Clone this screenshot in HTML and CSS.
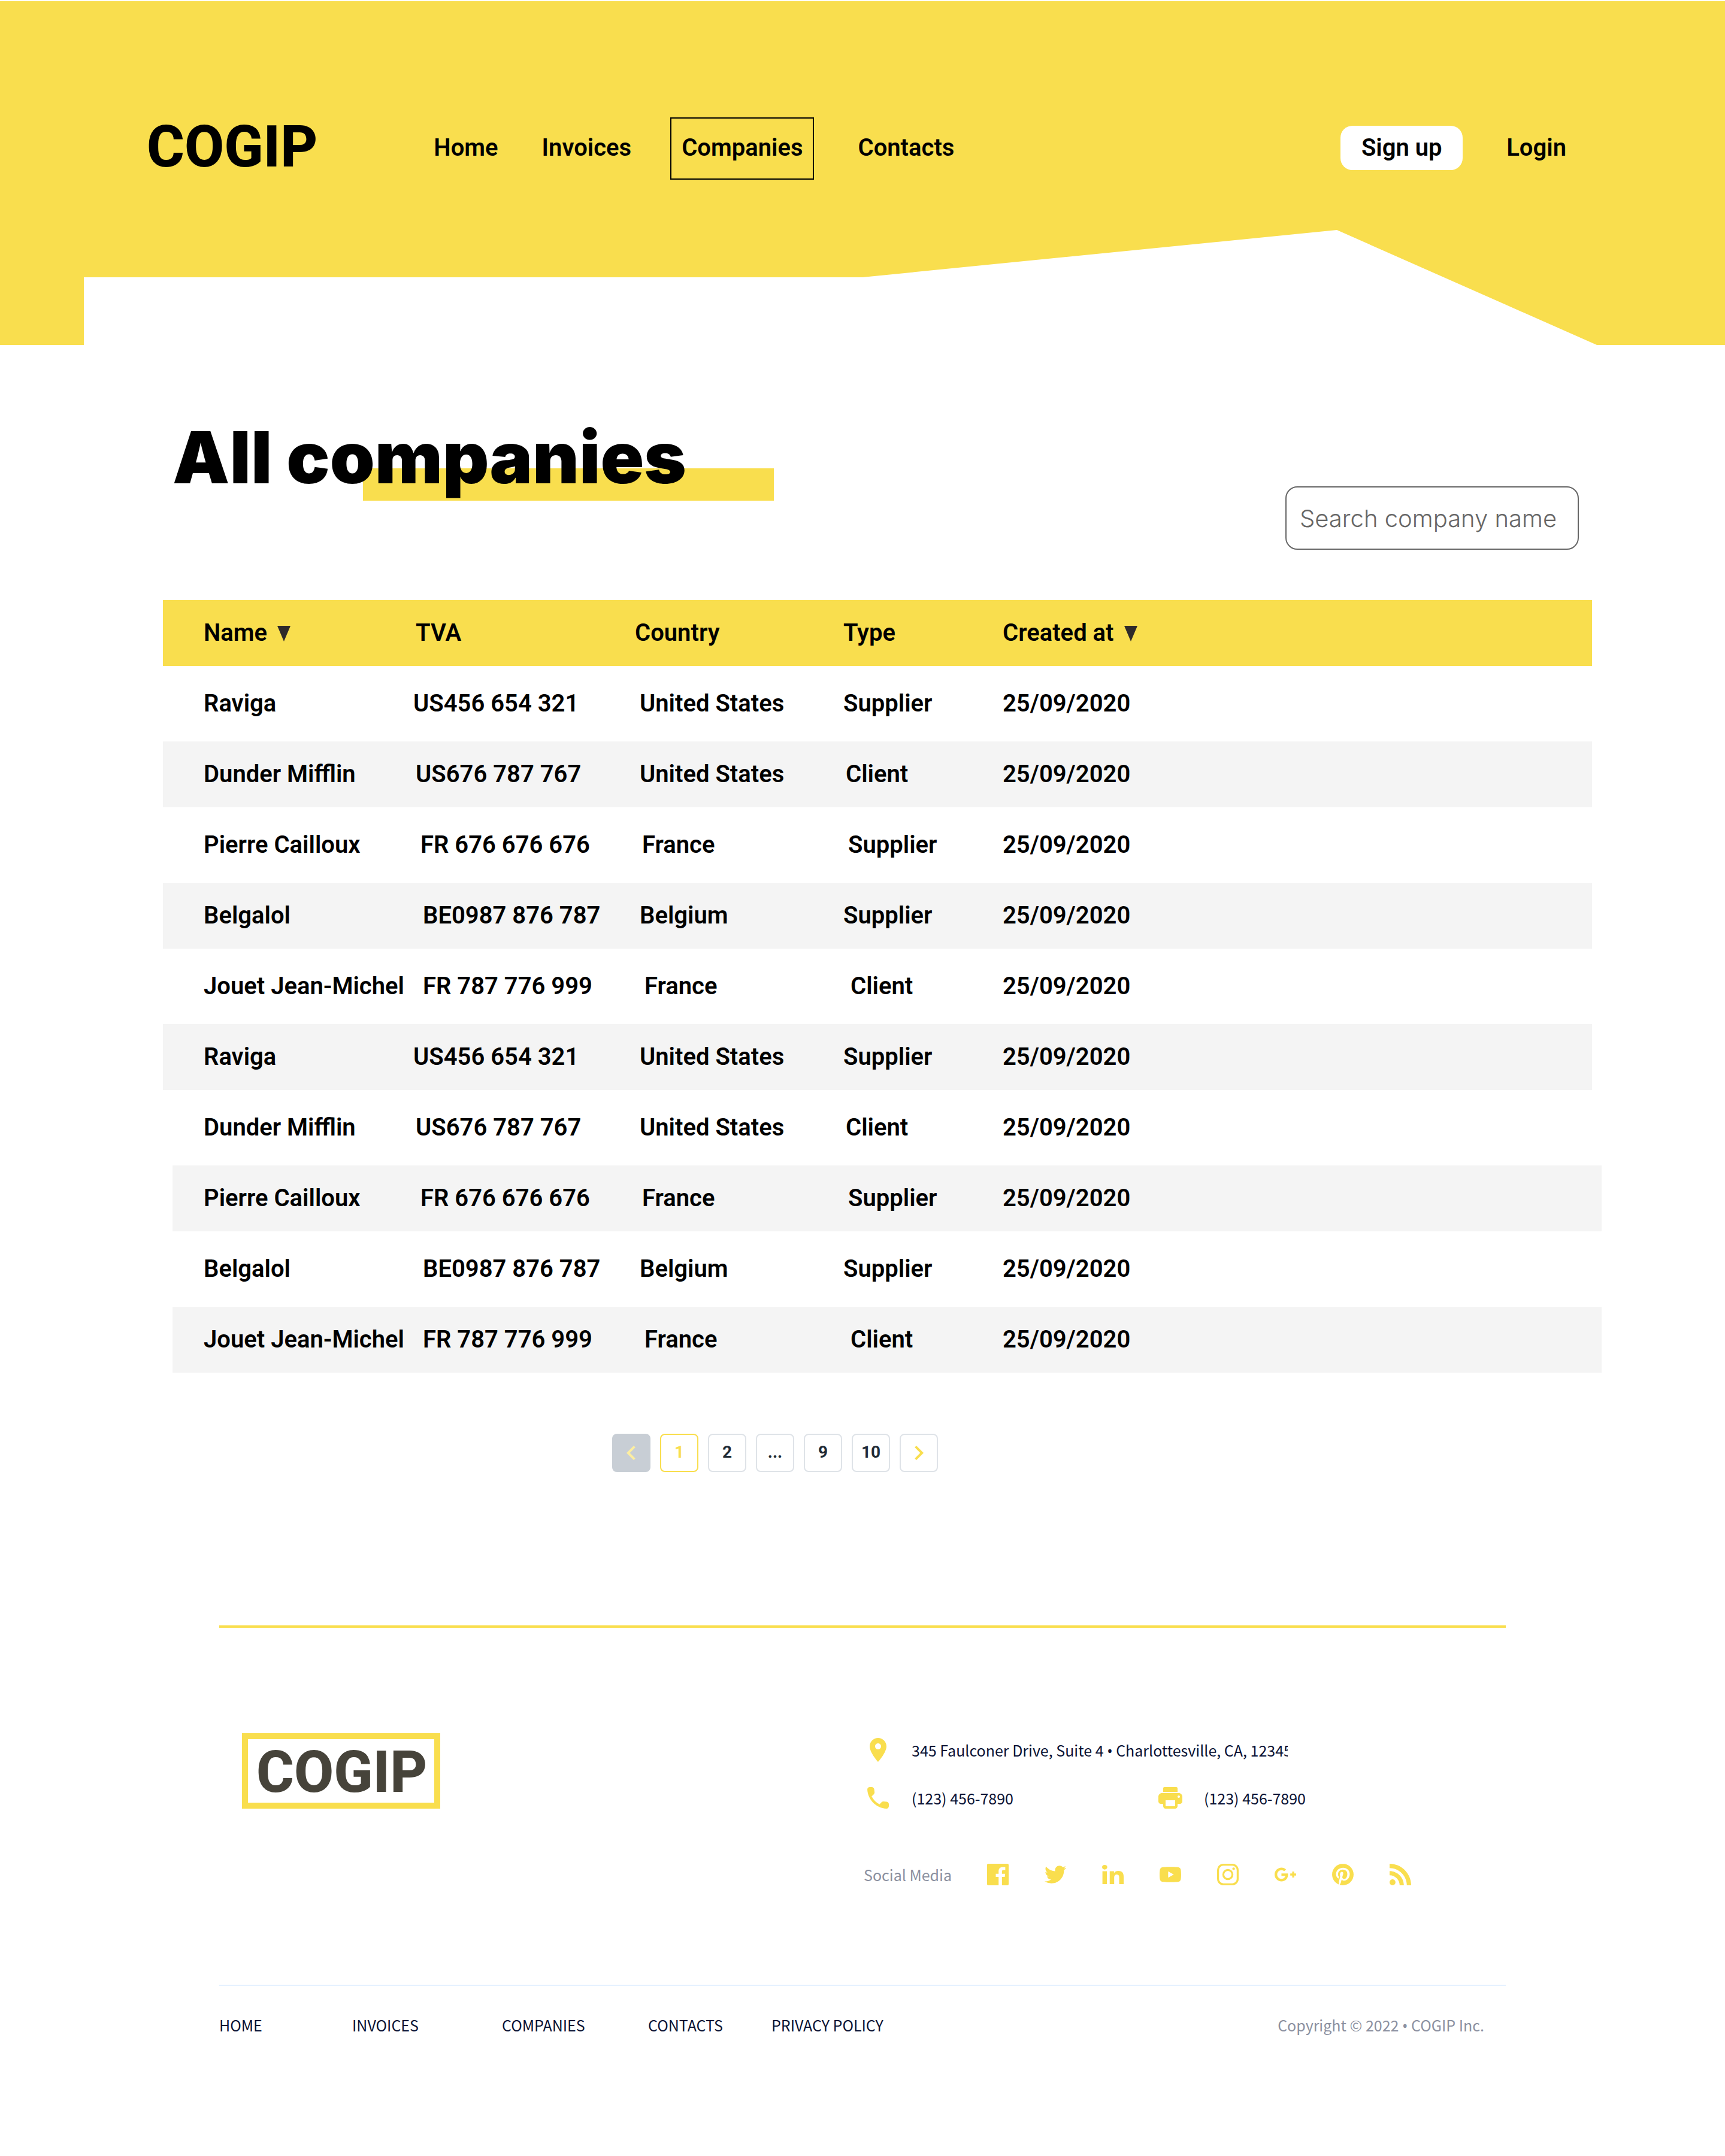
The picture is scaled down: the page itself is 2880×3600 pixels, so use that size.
FILE: index.html
```html
<!DOCTYPE html>
<html lang="en">
<head>
<meta charset="utf-8">
<title>COGIP - All companies</title>
<meta name="viewport" content="width=device-width, initial-scale=1">
<link rel="stylesheet" href="styles.css">
</head>
<body>
<header class="site-header">
  <div class="header-row">
    <a class="logo" href="#">COGIP</a>
    <nav class="main-nav" aria-label="Main">
      <a href="#">Home</a>
      <a href="#">Invoices</a>
      <a class="current" href="#" aria-current="page">Companies</a>
      <a href="#">Contacts</a>
    </nav>
    <div class="auth">
      <button class="signup" type="button">Sign up</button>
      <a href="#">Login</a>
    </div>
  </div>
</header>

<main>
  <div class="title-row">
    <h1>All companies</h1>
    <input class="search" type="search" placeholder="Search company name" aria-label="Search company name">
  </div>

  <table class="companies">
    <colgroup>
      <col class="col-name"><col class="col-tva"><col class="col-country"><col class="col-type"><col>
    </colgroup>
    <thead>
      <tr>
        <th scope="col"><button class="sort" type="button">Name <svg width="22" height="26" viewBox="0 0 22 26" aria-hidden="true"><path d="M0 0h22L11 26z"/></svg></button></th>
        <th scope="col" class="in-1">TVA</th>
        <th scope="col">Country</th>
        <th scope="col">Type</th>
        <th scope="col"><button class="sort" type="button">Created at <svg width="22" height="26" viewBox="0 0 22 26" aria-hidden="true"><path d="M0 0h22L11 26z"/></svg></button></th>
      </tr>
    </thead>
    <tbody>
      <tr><td>Raviga</td><td>US456 654 321</td><td class="in-2">United States</td><td>Supplier</td><td>25/09/2020</td></tr>
      <tr class="shade"><td>Dunder Mifflin</td><td class="in-1">US676 787 767</td><td class="in-2">United States</td><td class="in-1">Client</td><td>25/09/2020</td></tr>
      <tr><td>Pierre Cailloux</td><td class="in-3">FR 676 676 676</td><td class="in-3">France</td><td class="in-2">Supplier</td><td>25/09/2020</td></tr>
      <tr class="shade"><td>Belgalol</td><td class="in-4">BE0987 876 787</td><td class="in-2">Belgium</td><td>Supplier</td><td>25/09/2020</td></tr>
      <tr><td>Jouet Jean-Michel</td><td class="in-4">FR 787 776 999</td><td class="in-4">France</td><td class="in-3">Client</td><td>25/09/2020</td></tr>
      <tr class="shade"><td>Raviga</td><td>US456 654 321</td><td class="in-2">United States</td><td>Supplier</td><td>25/09/2020</td></tr>
      <tr><td>Dunder Mifflin</td><td class="in-1">US676 787 767</td><td class="in-2">United States</td><td class="in-1">Client</td><td>25/09/2020</td></tr>
      <tr class="shade shade-right"><td>Pierre Cailloux</td><td class="in-3">FR 676 676 676</td><td class="in-3">France</td><td class="in-2">Supplier</td><td>25/09/2020</td></tr>
      <tr><td>Belgalol</td><td class="in-4">BE0987 876 787</td><td class="in-2">Belgium</td><td>Supplier</td><td>25/09/2020</td></tr>
      <tr class="shade shade-right"><td>Jouet Jean-Michel</td><td class="in-4">FR 787 776 999</td><td class="in-4">France</td><td class="in-3">Client</td><td>25/09/2020</td></tr>
    </tbody>
  </table>

  <nav class="pager" aria-label="Pages">
    <button class="prev" type="button" disabled aria-label="Previous page"><svg class="icon" viewBox="0 0 24 24" aria-hidden="true"><path d="M15.41 7.41 14 6l-6 6 6 6 1.41-1.41L10.83 12z"/></svg></button>
    <button class="active" type="button" aria-current="page">1</button>
    <button type="button">2</button>
    <button type="button">...</button>
    <button type="button">9</button>
    <button type="button">10</button>
    <button class="next" type="button" aria-label="Next page"><svg class="icon" viewBox="0 0 24 24" aria-hidden="true"><path d="M10 6 8.59 7.41 13.17 12l-4.58 4.59L10 18l6-6z"/></svg></button>
  </nav>
</main>

<footer class="site-footer">
  <div class="footer-top">
    <div><a class="footer-logo" href="#">COGIP</a></div>
    <div class="contact">
      <div class="contact-item">
        <svg class="icon" viewBox="0 0 24 24" aria-hidden="true"><path d="M12 2C8.13 2 5 5.13 5 9c0 5.25 7 13 7 13s7-7.75 7-13c0-3.87-3.13-7-7-7zm0 9.5c-1.38 0-2.5-1.12-2.5-2.5s1.12-2.5 2.5-2.5 2.5 1.12 2.5 2.5-1.12 2.5-2.5 2.5z"/></svg>
        <span class="address">345 Faulconer Drive, Suite 4 <span class="bullet">•</span> Charlottesville, CA, 12345</span>
      </div>
      <div class="phones">
        <div class="contact-item">
          <svg class="icon" viewBox="0 0 24 24" aria-hidden="true"><path d="M19.23 15.26l-2.54-.29c-.61-.07-1.21.14-1.64.57l-1.84 1.84c-2.83-1.44-5.15-3.75-6.59-6.59l1.85-1.85c.43-.43.64-1.03.57-1.64l-.29-2.52c-.12-1.01-.97-1.77-1.99-1.77H5.03c-1.13 0-2.07.94-2 2.07.53 8.54 7.36 15.36 15.89 15.89 1.13.07 2.07-.87 2.07-2v-1.73c.01-1.01-.75-1.86-1.76-1.98z"/></svg>
          <span>(123) 456-7890</span>
        </div>
        <div class="contact-item">
          <svg class="icon" viewBox="0 0 24 24" aria-hidden="true"><path d="M19 8H5c-1.66 0-3 1.34-3 3v4c0 1.1.9 2 2 2h2v2c0 1.1.9 2 2 2h8c1.1 0 2-.9 2-2v-2h2c1.1 0 2-.9 2-2v-4c0-1.66-1.34-3-3-3zm-3 11H8v-5h8v5zm3-7c-.55 0-1-.45-1-1s.45-1 1-1 1 .45 1 1-.45 1-1 1zm-2-9H7c-.55 0-1 .45-1 1v3h12V4c0-.55-.45-1-1-1z"/></svg>
          <span>(123) 456-7890</span>
        </div>
      </div>
      <div class="social">
        <span class="social-label">Social Media</span>
        <a href="#" aria-label="Facebook"><svg class="icon" viewBox="-4 -4 32 32" aria-hidden="true"><path d="M22.676 0H1.324C.593 0 0 .593 0 1.324v21.352C0 23.408.593 24 1.324 24h11.494v-9.294H9.689v-3.621h3.129V8.41c0-3.099 1.894-4.785 4.659-4.785 1.325 0 2.464.097 2.796.141v3.24h-1.921c-1.5 0-1.792.721-1.792 1.771v2.311h3.584l-.465 3.63H16.56V24h6.115c.733 0 1.325-.592 1.325-1.324V1.324C24 .593 23.408 0 22.676 0"/></svg></a>
        <a href="#" aria-label="Twitter"><svg class="icon" viewBox="-4 -4 32 32" aria-hidden="true"><path d="M23.954 4.569c-.885.389-1.83.654-2.825.775 1.014-.611 1.794-1.574 2.163-2.723-.951.555-2.005.959-3.127 1.184-.896-.959-2.173-1.559-3.591-1.559-2.717 0-4.92 2.203-4.92 4.917 0 .39.045.765.127 1.124C7.691 8.094 4.066 6.13 1.64 3.161c-.427.722-.666 1.561-.666 2.475 0 1.71.87 3.213 2.188 4.096-.807-.026-1.566-.248-2.228-.616v.061c0 2.385 1.693 4.374 3.946 4.827-.413.111-.849.171-1.296.171-.314 0-.615-.03-.916-.086.631 1.953 2.445 3.377 4.604 3.417-1.68 1.319-3.809 2.105-6.102 2.105-.39 0-.779-.023-1.17-.067 2.189 1.394 4.768 2.209 7.557 2.209 9.054 0 13.999-7.496 13.999-13.986 0-.209 0-.42-.015-.63.961-.689 1.8-1.56 2.46-2.548l-.047-.02z"/></svg></a>
        <a href="#" aria-label="LinkedIn"><svg class="icon" viewBox="-4 -4 32 32" aria-hidden="true"><path transform="translate(0 1.3) scale(.0536 .0477)" d="M100.28 448H7.4V148.9h92.88zM53.79 108.1C24.09 108.1 0 83.5 0 53.8a53.79 53.79 0 0 1 107.58 0c0 29.7-24.1 54.3-53.79 54.3zM447.9 448h-92.68V302.4c0-34.7-.7-79.2-48.29-79.2-48.29 0-55.69 37.7-55.69 76.7V448h-92.78V148.9h89.08v40.8h1.3c12.4-23.5 42.69-48.3 87.88-48.3 94 0 111.28 61.9 111.28 142.3V448z"/></svg></a>
        <a href="#" aria-label="YouTube"><svg class="icon" viewBox="-4 -4 32 32" aria-hidden="true"><path d="M23.498 6.186a3.016 3.016 0 0 0-2.122-2.136C19.505 3.545 12 3.545 12 3.545s-7.505 0-9.377.505A3.017 3.017 0 0 0 .502 6.186C0 8.07 0 12 0 12s0 3.93.502 5.814a3.016 3.016 0 0 0 2.122 2.136c1.871.505 9.376.505 9.376.505s7.505 0 9.377-.505a3.015 3.015 0 0 0 2.122-2.136C24 15.93 24 12 24 12s0-3.93-.502-5.814zM9.545 15.568V8.432L15.818 12l-6.273 3.568z"/></svg></a>
        <a href="#" aria-label="Instagram"><svg class="icon" viewBox="-4 -4 32 32" aria-hidden="true"><g fill="none" stroke="currentColor" stroke-width="2.16"><rect x="1.08" y="1.08" width="21.84" height="21.84" rx="6"/><circle cx="12" cy="12" r="5.08"/></g><circle cx="18.4" cy="5.6" r="1.44"/></svg></a>
        <a href="#" aria-label="Google Plus"><svg class="icon" viewBox="-4 -4 32 32" aria-hidden="true"><path d="M7.635 10.909v2.619h4.335c-.173 1.125-1.31 3.295-4.331 3.295-2.604 0-4.731-2.16-4.731-4.823 0-2.662 2.122-4.822 4.728-4.822 1.485 0 2.479.633 3.045 1.178l2.073-1.994c-1.33-1.245-3.056-1.995-5.115-1.995C3.412 4.365 0 7.785 0 12s3.414 7.635 7.635 7.635c4.41 0 7.332-3.098 7.332-7.461 0-.501-.054-.885-.12-1.265H7.635zm16.365 0h-2.183V8.726h-2.183v2.183h-2.182v2.184h2.184v2.189h2.189v-2.189H24"/></svg></a>
        <a href="#" aria-label="Pinterest"><svg class="icon" viewBox="-4 -4 32 32" aria-hidden="true"><path d="M12.017 0C5.396 0 .029 5.367.029 11.987c0 5.079 3.158 9.417 7.618 11.162-.105-.949-.199-2.403.041-3.439.219-.937 1.406-5.957 1.406-5.957s-.359-.72-.359-1.781c0-1.663.967-2.911 2.168-2.911 1.024 0 1.518.769 1.518 1.688 0 1.029-.653 2.567-.992 3.992-.285 1.193.6 2.165 1.775 2.165 2.128 0 3.768-2.245 3.768-5.487 0-2.861-2.063-4.869-5.008-4.869-3.41 0-5.409 2.562-5.409 5.199 0 1.033.394 2.143.889 2.741.099.12.112.225.085.345-.09.375-.293 1.199-.334 1.363-.053.225-.172.271-.401.165-1.495-.69-2.433-2.878-2.433-4.646 0-3.776 2.748-7.252 7.92-7.252 4.158 0 7.392 2.967 7.392 6.923 0 4.135-2.607 7.462-6.233 7.462-1.214 0-2.354-.629-2.758-1.379l-.749 2.848c-.269 1.045-1.004 2.352-1.498 3.146 1.123.345 2.306.535 3.55.535 6.607 0 11.985-5.365 11.985-11.987C23.97 5.39 18.592.026 11.985.026z"/></svg></a>
        <a href="#" aria-label="RSS"><svg class="icon" viewBox="-4 -4 32 32" aria-hidden="true"><path d="M19.199 24C19.199 13.467 10.533 4.8 0 4.8V0c13.165 0 24 10.835 24 24h-4.801zM3.291 17.415c1.814 0 3.293 1.479 3.293 3.295 0 1.813-1.485 3.29-3.301 3.29C1.47 24 0 22.526 0 20.71s1.475-3.294 3.291-3.295zM15.909 24h-4.665c0-6.169-5.075-11.245-11.244-11.245V8.09c8.727 0 15.909 7.184 15.909 15.91z"/></svg></a>
      </div>
    </div>
  </div>
  <div class="footer-bottom">
    <nav class="footer-nav" aria-label="Footer">
      <a href="#">HOME</a>
      <a href="#">INVOICES</a>
      <a href="#">COMPANIES</a>
      <a href="#">CONTACTS</a>
      <a href="#">PRIVACY POLICY</a>
    </nav>
    <small class="copyright">Copyright © 2022 <span class="bullet">•</span> COGIP Inc.</small>
  </div>
</footer>
</body>
</html>
```
FILE: styles.css
```css
:root {
  --yellow: #f9de4e;
  --ink: #000;
  --navy: #091133;
  --muted: #8b90a0;
}

* { box-sizing: border-box; }

body {
  margin: 0;
  padding-top: 2px;
  background: #fff;
  color: var(--ink);
  font: 600 40px/48px Roboto, sans-serif;
}

a { color: inherit; text-decoration: none; }

button {
  margin: 0;
  padding: 0;
  border: 0;
  background: none;
  color: inherit;
  font: inherit;
}

.icon {
  display: block;
  flex: none;
  width: 48px;
  height: 48px;
  fill: currentColor;
}

/* Header: the yellow band is cut along its lower edge */
.site-header {
  padding: 194px 265px 276px 245px;
  background: var(--yellow);
  clip-path: polygon(0 0, 100% 0, 100% 100%, 92.57% 100%, 77.5% 382px, 50% 461px, 140px 461px, 140px 100%, 0 100%);
}

.header-row {
  display: flex;
  align-items: center;
  height: 104px;
}

.logo {
  padding-bottom: 6px;
  font-size: 96px;
  font-weight: 800;
  line-height: 96px;
}

.main-nav {
  display: flex;
  gap: 73px;
  margin-left: 194px;
}

.main-nav a { padding: 27px 0 29px; }

.main-nav .current {
  margin-left: -8px;
  padding: 25px 17px 27px;
  border: 2px solid var(--ink);
}

.auth {
  display: flex;
  align-items: center;
  gap: 73px;
  margin-left: auto;
  padding-bottom: 2px;
}

.signup {
  width: 204px;
  height: 74px;
  border-radius: 20px;
  background: #fff;
}

/* Title and search */
.title-row {
  display: flex;
  justify-content: space-between;
  align-items: flex-end;
  padding: 116px 244px 0 288px;
}

h1 {
  position: relative;
  z-index: 0;
  margin: 0 0 82px;
  font: 900 120px/144px Inter, sans-serif;
}

h1::after {
  content: "";
  position: absolute;
  z-index: -1;
  top: 90px;
  left: 318px;
  width: 686px;
  height: 54px;
  background: var(--yellow);
}

.search {
  width: 490px;
  height: 106px;
  padding: 0 12px 0 22px;
  border: 2px solid #666;
  border-radius: 20px;
  background: #fff;
  color: #666;
  font: 300 40px/48px Inter, sans-serif;
  outline: 0;
  appearance: none;
}

.search::placeholder { color: #666; opacity: 1; }

/* Companies table */
.companies {
  width: calc(100% - 478px);
  margin: 76px 206px 0 272px;
  border-spacing: 0 8px;
  table-layout: fixed;
}

.col-name { width: 418px; }
.col-tva { width: 370px; }
.col-country { width: 348px; }
.col-type { width: 266px; }

.companies th,
.companies td {
  height: 110px;
  padding: 0;
  font-weight: 600;
  text-align: left;
  white-space: nowrap;
}

.companies th:first-child,
.companies td:first-child { padding-left: 68px; }

.companies .in-1 { padding-left: 4px; }
.companies .in-2 { padding-left: 8px; }
.companies .in-3 { padding-left: 12px; }
.companies .in-4 { padding-left: 16px; }

.companies thead tr,
.companies .shade {
  background: linear-gradient(var(--row), var(--row)) left / calc(100% - 16px) 100% no-repeat;
}

.companies thead tr { --row: var(--yellow); }
.companies .shade { --row: #f4f4f4; }
.companies .shade-right { background-position: right; }

.sort {
  display: flex;
  align-items: center;
  gap: 17px;
}

.sort svg { margin-top: 2px; fill: #2f2a2a; }

/* Pagination */
.pager {
  display: flex;
  gap: 16px;
  padding: 94px 0 0 1022px;
}

.pager button {
  display: flex;
  align-items: center;
  justify-content: center;
  width: 64px;
  height: 64px;
  padding-bottom: 2px;
  border: 2px solid #dfe3e8;
  border-radius: 8px;
  color: #212b36;
  font-size: 28px;
  font-weight: 700;
}

.pager .active { border-color: var(--yellow); color: var(--yellow); }
.pager .next { padding: 0; color: var(--yellow); }
.pager .prev { padding: 0; border-color: #c8ced5; background: #c8ced5; color: #fdeea0; }

/* Footer */
.site-footer {
  margin: 256px 366px 0;
  padding-bottom: 176px;
  border-top: 4px solid var(--yellow);
  color: var(--navy);
  font: 400 25px/48px "Noto Sans CJK SC", sans-serif;
}

.footer-top {
  display: grid;
  grid-template-columns: 1038px 1fr;
  padding: 176px 0 160px 38px;
}

.footer-logo {
  display: inline-block;
  padding: 7px 12px 3px 14px;
  border: 10px solid var(--yellow);
  color: #46433a;
  font: 800 96px/96px Roboto, sans-serif;
}

.contact { padding-top: 4px; }
.contact .icon { color: var(--yellow); }

.contact-item {
  display: flex;
  gap: 32px;
  height: 48px;
}

.address {
  width: 628px;
  overflow: hidden;
  white-space: nowrap;
}

.bullet { font-family: "Noto Sans", sans-serif; line-height: 24px; }

.phones {
  display: grid;
  grid-template-columns: 488px 1fr;
  margin: 32px 0 80px;
}

.social {
  display: flex;
  gap: 48px;
  height: 48px;
}

.social-label { width: 152px; }

.social-label,
.copyright { color: var(--muted); }

.footer-bottom {
  display: flex;
  justify-content: space-between;
  padding: 41px 36px 0 0;
  border-top: 2px solid #e5f1ff;
}

.footer-nav {
  display: grid;
  grid-template-columns: 222px 250px 244px 206px auto;
}

.copyright { font-size: 25px; }
```
